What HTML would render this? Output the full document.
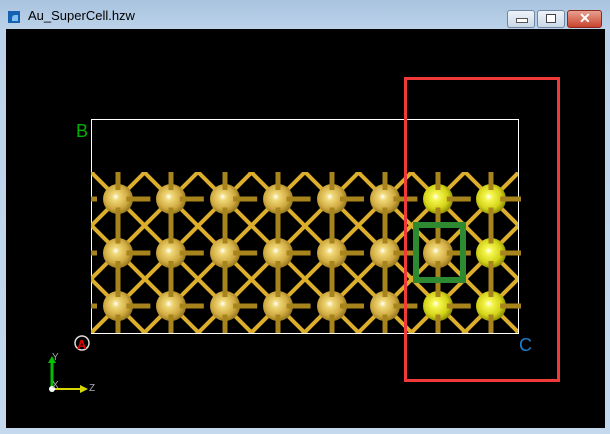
<!DOCTYPE html>
<html><head><meta charset="utf-8"><style>
html,body{margin:0;padding:0;width:610px;height:434px;overflow:hidden;background:#c2d6eb}
.win{position:absolute;left:0;top:0;width:610px;height:434px;overflow:hidden;background:linear-gradient(#a9c3de 0px,#bcd2ea 30px,#c4d9ee 434px)}
.title{position:absolute;left:28px;top:8px;font:13px "Liberation Sans",sans-serif;color:#000}
.icon{position:absolute;left:8px;top:11px;width:12px;height:12px;background:#1560b0}
.icon:after{content:"";position:absolute;left:4px;top:4px;width:6px;height:6px;background:#7fc0f0;border-radius:3px 0 0 0}
.btn{position:absolute;top:10px;height:16px;border:1px solid #6f87a5;border-radius:3px;background:linear-gradient(#eef3f9,#cbd9e8)}
.view{position:absolute;left:6px;top:29px;width:599px;height:399px;background:#000}
svg{display:block}
</style></head><body><div class="win">
<div class="icon"></div><div class="title">Au_SuperCell.hzw</div>
<div class="btn" style="left:507px;width:26px"><div style="position:absolute;left:8px;top:7px;width:10px;height:3px;background:#fff;border:1px solid #555"></div></div>
<div class="btn" style="left:537px;width:26px"><div style="position:absolute;left:8px;top:3px;width:8px;height:7px;border:1px solid #444;background:#fff"></div></div>
<div class="btn" style="left:567px;width:33px;border-color:#8b2a20;background:linear-gradient(#e8a090,#c8442e)"><div style="position:absolute;left:11px;top:-1px;color:#fff;font:bold 14px 'Liberation Sans',sans-serif">✕</div></div>
<div class="view"></div>
<svg width="610" height="434" style="position:absolute;left:0;top:0">
<defs>
<radialGradient id="g" cx="0.45" cy="0.45" r="0.6" fx="0.42" fy="0.42"><stop offset="0" stop-color="#ffffff"/><stop offset="0.2" stop-color="#f0d878"/><stop offset="0.65" stop-color="#d0aa40"/><stop offset="1" stop-color="#8a6c18"/></radialGradient>
<radialGradient id="y" cx="0.45" cy="0.45" r="0.6" fx="0.42" fy="0.42"><stop offset="0" stop-color="#ffffff"/><stop offset="0.2" stop-color="#f6f650"/><stop offset="0.65" stop-color="#d4d418"/><stop offset="1" stop-color="#808000"/></radialGradient>
<clipPath id="c"><rect x="91" y="172" width="427" height="161"/></clipPath>
<circle id="A" r="15" fill="url(#g)"/><circle id="Y" r="15" fill="url(#y)"/>
</defs>
<rect x="91.5" y="119.5" width="427" height="214" fill="none" stroke="#fff" stroke-width="1"/>
<g clip-path="url(#c)" stroke="#dcae2c" stroke-width="4">
<line x1="91" y1="332" x2="518" y2="759"/><line x1="91" y1="279" x2="518" y2="706"/><line x1="91" y1="225" x2="518" y2="652"/><line x1="91" y1="172" x2="518" y2="599"/><line x1="91" y1="119" x2="518" y2="546"/><line x1="91" y1="65" x2="518" y2="492"/><line x1="91" y1="12" x2="518" y2="439"/><line x1="91" y1="-42" x2="518" y2="385"/><line x1="91" y1="-95" x2="518" y2="332"/><line x1="91" y1="-148" x2="518" y2="279"/><line x1="91" y1="-202" x2="518" y2="225"/><line x1="91" y1="-255" x2="518" y2="172"/>
<line x1="91" y1="119" x2="518" y2="-308"/><line x1="91" y1="173" x2="518" y2="-254"/><line x1="91" y1="226" x2="518" y2="-201"/><line x1="91" y1="279" x2="518" y2="-148"/><line x1="91" y1="333" x2="518" y2="-94"/><line x1="91" y1="386" x2="518" y2="-41"/><line x1="91" y1="440" x2="518" y2="13"/><line x1="91" y1="493" x2="518" y2="66"/><line x1="91" y1="546" x2="518" y2="119"/><line x1="91" y1="600" x2="518" y2="173"/><line x1="91" y1="653" x2="518" y2="226"/><line x1="91" y1="706" x2="518" y2="279"/><line x1="91" y1="760" x2="518" y2="333"/>
</g>
<g>
<use href="#A" x="118" y="199"/><use href="#A" x="171" y="199"/><use href="#A" x="225" y="199"/><use href="#A" x="278" y="199"/><use href="#A" x="332" y="199"/><use href="#A" x="385" y="199"/><use href="#Y" x="438" y="199"/><use href="#Y" x="491" y="199"/>
<use href="#A" x="118" y="253"/><use href="#A" x="171" y="253"/><use href="#A" x="225" y="253"/><use href="#A" x="278" y="253"/><use href="#A" x="332" y="253"/><use href="#A" x="385" y="253"/><use href="#A" x="438" y="253"/><use href="#Y" x="491" y="253"/>
<use href="#A" x="118" y="306"/><use href="#A" x="171" y="306"/><use href="#A" x="225" y="306"/><use href="#A" x="278" y="306"/><use href="#A" x="332" y="306"/><use href="#A" x="385" y="306"/><use href="#Y" x="438" y="306"/><use href="#Y" x="491" y="306"/>
</g>
<g stroke="#a8841c" stroke-width="5" stroke-dasharray="24 29.4">
<line x1="91" y1="199" x2="521" y2="199" stroke-dashoffset="18"/><line x1="91" y1="253" x2="521" y2="253" stroke-dashoffset="18"/><line x1="91" y1="306" x2="521" y2="306" stroke-dashoffset="18"/>
</g>
<g stroke="#a8841c" stroke-width="5" stroke-dasharray="36 17.5">
<line x1="118" y1="172" x2="118" y2="333" stroke-dashoffset="18"/><line x1="171" y1="172" x2="171" y2="333" stroke-dashoffset="18"/><line x1="225" y1="172" x2="225" y2="333" stroke-dashoffset="18"/><line x1="278" y1="172" x2="278" y2="333" stroke-dashoffset="18"/><line x1="332" y1="172" x2="332" y2="333" stroke-dashoffset="18"/><line x1="385" y1="172" x2="385" y2="333" stroke-dashoffset="18"/><line x1="438" y1="172" x2="438" y2="333" stroke-dashoffset="18"/><line x1="491" y1="172" x2="491" y2="333" stroke-dashoffset="18"/>
</g>
<rect x="416" y="225" width="47" height="55" fill="none" stroke="#2e8a30" stroke-width="6"/>
<rect x="405.5" y="78.5" width="153" height="302" fill="none" stroke="#f03a3a" stroke-width="3"/>
<text x="76" y="137" fill="#00b000" font-family="Liberation Sans" font-size="18">B</text>
<text x="519" y="351" fill="#1a7fd0" font-family="Liberation Sans" font-size="18">C</text>
<circle cx="82" cy="343" r="7" fill="none" stroke="#ddd" stroke-width="1.5"/>
<text x="77" y="349" fill="#e00000" font-family="Liberation Sans" font-size="13" font-weight="bold">A</text>
<line x1="52" y1="389" x2="52" y2="362" stroke="#00c000" stroke-width="3"/><polygon points="48,363 56,363 52,356" fill="#00c000"/>
<line x1="52" y1="389" x2="82" y2="389" stroke="#d8d800" stroke-width="2"/><polygon points="80,385 80,393 88,389" fill="#d8d800"/>
<circle cx="52" cy="389" r="3" fill="#fff"/>
<text x="52" y="360" fill="#aaa" font-family="Liberation Sans" font-size="10">Y</text>
<text x="52" y="388" fill="#aaa" font-family="Liberation Sans" font-size="10">X</text>
<text x="89" y="391" fill="#aaa" font-family="Liberation Sans" font-size="10">Z</text>
</svg>
</div></body></html>
